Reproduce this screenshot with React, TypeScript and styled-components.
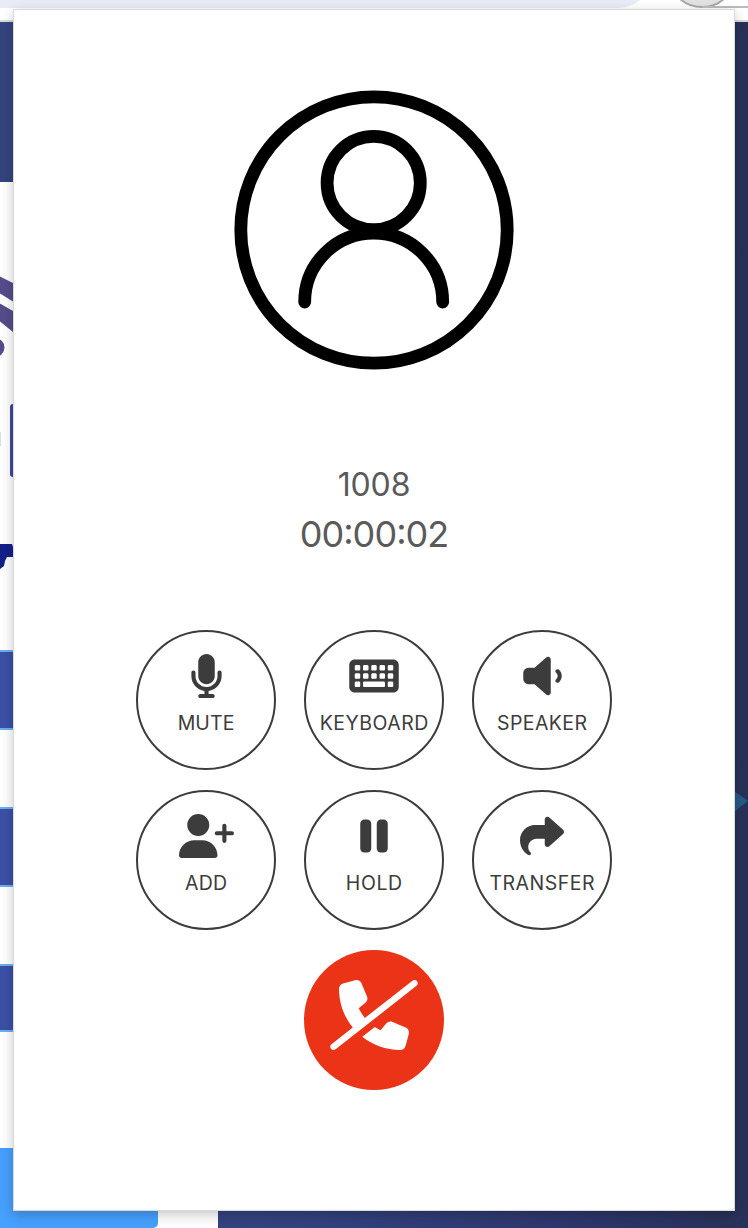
import React from "react";
import styled, { createGlobalStyle } from "styled-components";
import {
  FaKeyboard,
  FaMicrophone,
  FaPause,
  FaPhoneSlash,
  FaShare,
  FaUserPlus,
  FaVolumeLow,
} from "react-icons/fa6";

const GlobalStyle = createGlobalStyle`
  * { box-sizing: border-box; }
  body { margin: 0; background: #fff; font-family: Inter, "Liberation Sans", sans-serif; overflow: hidden; }
`;

const Page = styled.div`
  position: relative;
  width: 748px;
  height: 1228px;
  display: flex;
  flex-direction: column;
  overflow: hidden;
  background: #fff;
`;

const BrowserBar = styled.div`
  height: 22px;
  flex: none;
  display: flex;
  justify-content: space-between;
  border-bottom: 2px solid #d9dcda;
  overflow: hidden;
`;

const AddressField = styled.div`
  width: 652px;
  height: 40px;
  margin-top: -32px;
  border-radius: 0 0 34px 0;
  background: #e8ecf6;
`;

const Site = styled.div`
  flex: 1;
  display: flex;
  background: linear-gradient(90deg, #34447f 0%, #32427f 40%, #2d376d 75%, #283158 100%);
`;

const SideColumn = styled.div`
  width: 218px;
  display: flex;
  flex-direction: column;
`;

const Banner = styled.div`
  height: 160px;
  background: #34447e;
`;

const LogoArea = styled.div`
  height: 468px;
  background: #fff;
`;

const LogoEdge = styled.svg`
  display: block;
`;

const Field = styled.div<{ $height: number }>`
  height: ${(p) => p.$height}px;
  background: #3c50a6;
  border: solid #6bb0f0;
  border-width: 2px 0;
`;

const Gap = styled.div<{ $height: number }>`
  height: ${(p) => p.$height}px;
  background: #fff;
`;

const ButtonRow = styled.div`
  flex: 1;
  background: #fff;
`;

const SiteButton = styled.div`
  width: 158px;
  height: 80px;
  border-radius: 0 0 5px 0;
  background: #46a0fe;
`;

const Backdrop = styled.div`
  flex: 1;
  display: flex;
  align-items: flex-start;
  justify-content: flex-end;
`;

const Pointer = styled.svg`
  margin-top: 769px;
`;

const Popup = styled.main`
  position: absolute;
  left: 13px;
  top: 9px;
  width: 722px;
  height: 1202px;
  display: flex;
  flex-direction: column;
  align-items: center;
  padding-top: 80px;
  border: 1px solid #d8dad9;
  background: #fff;
  box-shadow: 0 4px 12px rgba(0, 0, 0, 0.22);
`;

const Avatar = styled.svg`
  display: block;
  flex: none;
`;

const Caller = styled.div`
  margin-top: 93px;
  font-size: 32px;
  line-height: 44px;
  letter-spacing: -0.15px;
  color: #5a5a5a;
`;

const Timer = styled.div`
  margin-top: 3px;
  font-size: 36px;
  line-height: 48px;
  letter-spacing: -0.95px;
  font-feature-settings: "case" 1;
  color: #5a5a5a;
`;

const Pad = styled.div`
  margin-top: 72px;
  display: grid;
  grid-template-columns: repeat(3, 140px);
  gap: 20px 28px;
`;

const PadButton = styled.button<{ $iconWidth: number }>`
  height: 140px;
  padding: 22px 0 0;
  display: flex;
  flex-direction: column;
  align-items: center;
  border: 2px solid #3c3c3c;
  border-radius: 50%;
  background: #fff;
  color: #3c3c3c;
  font-family: inherit;

  svg {
    display: block;
    height: 44px;
    width: ${(p) => p.$iconWidth}px;
    flex: none;
  }
`;

const Label = styled.span<{ $spacing: number }>`
  margin-top: 13px;
  font-size: 19.5px;
  line-height: 24px;
  letter-spacing: ${(p) => p.$spacing}px;
  margin-right: ${(p) => -p.$spacing}px;
  white-space: nowrap;
`;

const HangUp = styled.button`
  margin-top: 20px;
  width: 140px;
  height: 140px;
  flex: none;
  padding: 30px 0 0;
  display: flex;
  align-items: flex-start;
  justify-content: center;
  border: 0;
  border-radius: 50%;
  background: #eb3317;
  color: #fff;

  svg {
    display: block;
    height: 70px;
    width: 88px;
    flex: none;
  }
`;

const actions = [
  { label: "MUTE", icon: <FaMicrophone />, width: 33, spacing: 0.1 },
  { label: "KEYBOARD", icon: <FaKeyboard />, width: 50, spacing: 0.5 },
  { label: "SPEAKER", icon: <FaVolumeLow />, width: 39, spacing: 0.4 },
  { label: "ADD", icon: <FaUserPlus />, width: 55, spacing: 0.3 },
  { label: "HOLD", icon: <FaPause />, width: 28, spacing: 0.6 },
  { label: "TRANSFER", icon: <FaShare />, width: 44, spacing: 0.5 },
];

export default function App() {
  return (
    <Page>
      <GlobalStyle />
      <BrowserBar>
        <AddressField />
        <svg width="74" height="20" viewBox="674 0 74 20">
          <circle cx="702" cy="-27" r="34" fill="#e2e2e2" stroke="#a9a9a9" strokeWidth="2" />
          <path d="M702 7H748" stroke="#bcbcbc" strokeWidth="2" />
        </svg>
      </BrowserBar>
      <Site>
        <SideColumn>
          <Banner />
          <LogoArea>
            <LogoEdge width="13" height="468" viewBox="0 182 13 468">
              <path d="M0 276.5L13 283V301.5L0 293.5ZM0 303.5L13 311V332L0 321.5Z" fill="#544d8b" />
              <circle cx="-5" cy="347.5" r="9.5" fill="#544d8b" />
              <path d="M0 432H1V446H0Z" fill="#dcdcf5" />
              <path d="M13 404Q10 404 10 407V474Q10 477 13 477Z" fill="#3e4a99" />
              <path d="M0 544H12L13 547V557H7L5 561L4 566L0 569Z" fill="#14208a" />
            </LogoEdge>
          </LogoArea>
          <Field $height={80} />
          <Gap $height={77} />
          <Field $height={80} />
          <Gap $height={77} />
          <Field $height={68} />
          <Gap $height={116} />
          <ButtonRow>
            <SiteButton />
          </ButtonRow>
        </SideColumn>
        <Backdrop>
          <Pointer width="14" height="22" viewBox="0 0 14 22">
            <path d="M0 0L14 10L0 21Z" fill="#285986" />
          </Pointer>
        </Backdrop>
      </Site>
      <Popup>
        <Avatar width="280" height="280" viewBox="234 90 280 280" fill="none" stroke="#000" strokeWidth="12.8" strokeLinecap="round">
          <circle cx="374" cy="230" r="133.2" />
          <circle cx="373.7" cy="183" r="46.6" />
          <path d="M304.7 302A69 69 0 0 1 442.7 302" />
        </Avatar>
        <Caller>1008</Caller>
        <Timer>00:00:02</Timer>
        <Pad>
          {actions.map((a) => (
            <PadButton key={a.label} $iconWidth={a.width}>
              {a.icon}
              <Label $spacing={a.spacing}>{a.label}</Label>
            </PadButton>
          ))}
        </Pad>
        <HangUp aria-label="Hang up">
          <FaPhoneSlash />
        </HangUp>
      </Popup>
    </Page>
  );
}
